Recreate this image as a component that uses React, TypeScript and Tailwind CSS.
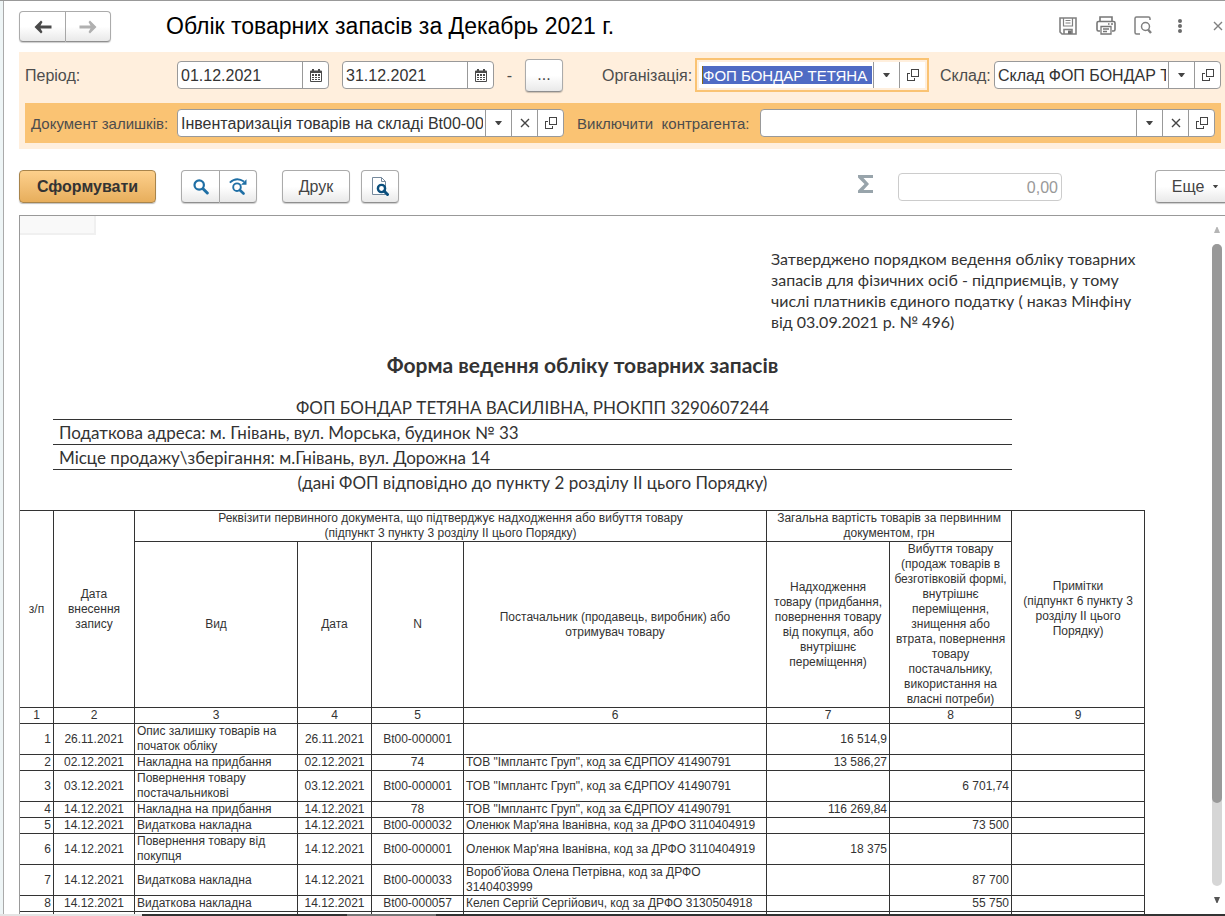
import React, { useState } from 'react';
import clsx from 'clsx';

type IconProps = { className?: string };

interface EntryRow {
  id: number;
  date: string;
  kind: string;
  docDate: string;
  number: string;
  partner: string;
  income: string;
  outcome: string;
}

const ROWS: EntryRow[] = [
  { id: 1, date: '26.11.2021', kind: 'Опис залишку товарів на початок обліку', docDate: '26.11.2021', number: 'Bt00-000001', partner: '', income: '16 514,9', outcome: '' },
  { id: 2, date: '02.12.2021', kind: 'Накладна на придбання', docDate: '02.12.2021', number: '74', partner: 'ТОВ "Імплантс Груп", код за ЄДРПОУ 41490791', income: '13 586,27', outcome: '' },
  { id: 3, date: '03.12.2021', kind: 'Повернення товару постачальникові', docDate: '03.12.2021', number: 'Bt00-000001', partner: 'ТОВ "Імплантс Груп", код за ЄДРПОУ 41490791', income: '', outcome: '6 701,74' },
  { id: 4, date: '14.12.2021', kind: 'Накладна на придбання', docDate: '14.12.2021', number: '78', partner: 'ТОВ "Імплантс Груп", код за ЄДРПОУ 41490791', income: '116 269,84', outcome: '' },
  { id: 5, date: '14.12.2021', kind: 'Видаткова накладна', docDate: '14.12.2021', number: 'Bt00-000032', partner: "Оленюк Мар'яна Іванівна, код за ДРФО 3110404919", income: '', outcome: '73 500' },
  { id: 6, date: '14.12.2021', kind: 'Повернення товару від покупця', docDate: '14.12.2021', number: 'Bt00-000001', partner: "Оленюк Мар'яна Іванівна, код за ДРФО 3110404919", income: '18 375', outcome: '' },
  { id: 7, date: '14.12.2021', kind: 'Видаткова накладна', docDate: '14.12.2021', number: 'Bt00-000033', partner: "Вороб'йова Олена Петрівна, код за ДРФО 3140403999", income: '', outcome: '87 700' },
  { id: 8, date: '14.12.2021', kind: 'Видаткова накладна', docDate: '14.12.2021', number: 'Bt00-000057', partner: 'Келеп Сергій Сергійович, код за ДРФО 3130504918', income: '', outcome: '55 750' },
];

// --- Icons ---
const ArrowIcon = ({ className }: IconProps) => (
  <svg viewBox="0 0 18 14" className={clsx('h-[14px] w-[18px]', className)} fill="currentColor">
    <path d="M0.5 7 7 0.5 8.5 2 6.5 5.5H17.5V8.5H6.5L8.5 12 7 13.5Z" />
  </svg>
);

const CaretIcon = ({ className }: IconProps) => (
  <svg viewBox="0 0 7 4" className={clsx('h-1 w-[7px]', className)} fill="currentColor">
    <path d="M0 0H7L4 4H3Z" />
  </svg>
);

const ScrollArrowIcon = ({ className }: IconProps) => (
  <svg viewBox="0 0 6 6" className={clsx('size-1.5', className)} fill="currentColor">
    <path d="M0 0H6L3.5 6H2.5Z" />
  </svg>
);

const CrossIcon = ({ className }: IconProps) => (
  <svg viewBox="0 0 10 10" className={clsx('size-[10px]', className)} fill="none" stroke="currentColor" strokeWidth="1.4">
    <path d="M1 1 9 9M9 1 1 9" />
  </svg>
);

const OpenIcon = () => (
  <svg viewBox="0 0 12 12" className="size-3" fill="none" stroke="currentColor" shapeRendering="crispEdges">
    <path d="M4.5 0.5H11.5V7.5H4.5ZM3 4.5H0.5V11.5H7.5V9" />
  </svg>
);

const CalendarIcon = () => (
  <svg viewBox="0 0 12 13" className="h-[13px] w-3">
    <path d="M1 1.5H2V0H4V1.5H8V0H10V1.5H11Q12 1.5 12 2.5V12Q12 13 11 13H1Q0 13 0 12V2.5Q0 1.5 1 1.5Z" fill="#4a4a4a" />
    <path d="M1 4H11V12H1Z" fill="#fff" />
    <path d="M2 5H4V7H2ZM5 5H7V7H5ZM8 5H10V7H8ZM2 8H4V9H2ZM5 8H7V9H5ZM8 8H10V9H8ZM2 10H4V11H2ZM5 10H7V11H5ZM8 10H10V11H8Z" fill="#4a4a4a" />
  </svg>
);

const SaveIcon = () => (
  <svg viewBox="0 0 18 18" className="size-[18px]" fill="none" stroke="#808080" strokeWidth="1.6">
    <path d="M1 1H17V17H3L1 15Z" />
    <path d="M4.5 1V9H13.5V1M6.5 3.5H11.5M6.5 6H11.5" strokeWidth="1.2" />
    <path d="M5 17V12.5H13V17" />
    <path d="M9 13.5H12.5V17H9Z" fill="#707070" stroke="none" />
  </svg>
);

const PrinterIcon = () => (
  <svg viewBox="0 0 20 19" className="h-[19px] w-5" fill="none" stroke="#777" strokeWidth="1.6">
    <path d="M4 5.5V1H16V5.5" />
    <path d="M4 15H2.5Q1 15 1 13.5V7Q1 5.5 2.5 5.5H17.5Q19 5.5 19 7V13.5Q19 15 17.5 15H16" />
    <path d="M5 10.5H15V18H5ZM7 13H13M7 15.5H11" strokeWidth="1.3" />
    <path d="M12 8H13.5M15 8H17" />
  </svg>
);

const PreviewIcon = () => (
  <svg viewBox="0 0 18 19" className="h-[19px] w-[18px]" fill="none" stroke="#808080" strokeWidth="1.5">
    <path d="M6 18H2.5Q1 18 1 16.5V2.5Q1 1 2.5 1H14.5Q16 1 16 2.5V4" />
    <circle cx="11.5" cy="10.5" r="4" />
    <path d="M14 13.5 17 17" strokeWidth="2.4" />
  </svg>
);

const DotsIcon = () => (
  <svg viewBox="0 0 4 14" className="h-[14px] w-1" fill="#6b6b6b">
    <circle cx="2" cy="2" r="2" />
    <circle cx="2" cy="7" r="2" />
    <circle cx="2" cy="12" r="2" />
  </svg>
);

const SearchIcon = () => (
  <svg viewBox="0 0 16 16" className="size-4" fill="none" stroke="#1f6fa5">
    <circle cx="6.2" cy="6" r="4.7" strokeWidth="2.2" />
    <path d="M10 9.8 14.3 14" strokeWidth="3" strokeLinecap="round" />
  </svg>
);

const SearchNextIcon = () => (
  <svg viewBox="0 0 18 17" className="h-[17px] w-[18px]" fill="none" stroke="#1f6fa5">
    <path d="M0.8 4.6Q7.5 -1.6 15 3.6" strokeWidth="1.8" />
    <path d="M17.5 1.2V6.8H12Z" fill="#1f6fa5" stroke="none" />
    <circle cx="8" cy="9.2" r="3.8" strokeWidth="1.9" />
    <path d="M10.8 12 14.5 15.5" strokeWidth="2.6" strokeLinecap="round" />
  </svg>
);

const DocSearchIcon = () => (
  <svg viewBox="0 0 17 19" className="h-[19px] w-[17px]" fill="none">
    <path d="M0.5 0.5H9.5L13.5 4.5V17.5H0.5Z" fill="#fff" stroke="#75899c" />
    <path d="M9.5 0.5V4.5H13.5" stroke="#75899c" />
    <circle cx="9.5" cy="11.5" r="3.6" fill="#fff" stroke="#0b4f7d" strokeWidth="2.4" />
    <path d="M12.3 14.3 15.5 17.5" stroke="#0b4f7d" strokeWidth="3" strokeLinecap="round" />
  </svg>
);

// --- Form parts ---
const FieldButton: React.FC<{ label: string; children: React.ReactNode }> = ({ label, children }) => (
  <button aria-label={label} className="flex w-[26px] shrink-0 items-center justify-center border-l border-[#999] text-[#444]">
    {children}
  </button>
);

interface FieldProps {
  id: string;
  initial: string;
  ariaLabel?: string;
  className?: string;
  focused?: boolean;
  children: React.ReactNode;
}

const Field: React.FC<FieldProps> = ({ id, initial, ariaLabel, className, focused, children }) => {
  const [value, setValue] = useState(initial);
  return (
    <div
      className={clsx(
        'flex min-w-0 overflow-hidden bg-white',
        focused ? 'h-[26px]' : 'h-7 rounded border border-[#999]',
        className
      )}
    >
      <input
        id={id}
        aria-label={ariaLabel}
        value={value}
        onChange={(e) => setValue(e.target.value)}
        className={clsx(
          'min-w-0 flex-1 pt-0.5 outline-none',
          focused ? 'ml-[3px] mr-px my-1 border-l border-[#8c6a14] bg-[#4f6bc4] text-[15px] text-white' : 'mr-0.5 pl-[3px] text-base text-[#333]'
        )}
      />
      {children}
    </div>
  );
};

const plainButton =
  'flex items-center justify-center border border-[#ababab] border-b-[#8f8f8f] bg-linear-to-b from-white from-50% to-[#e9e9e9] text-[#444] shadow-[0_1px_1px_rgba(0,0,0,0.2)]';

const Header = () => (
  <header className="flex h-[51px] shrink-0 items-center pl-[15px]">
    <div className="flex h-[31px]">
      <button aria-label="Назад" className={clsx(plainButton, 'w-[47px] rounded-l')}>
        <ArrowIcon className="text-[#4a4a4a]" />
      </button>
      <button aria-label="Вперед" className={clsx(plainButton, 'w-[45px] rounded-r border-l-0')}>
        <ArrowIcon className="rotate-180 text-[#b0b0b0]" />
      </button>
    </div>
    <h1 className="ml-[55px] flex-1 text-[23px] text-black">Облік товарних запасів за Декабрь 2021 г.</h1>
    <div className="flex items-center pb-0.5">
      <button aria-label="Зберегти"><SaveIcon /></button>
      <button aria-label="Друкувати" className="ml-[19px]"><PrinterIcon /></button>
      <button aria-label="Перегляд" className="ml-[18px]"><PreviewIcon /></button>
      <button aria-label="Більше" className="ml-[26px]"><DotsIcon /></button>
      <button aria-label="Закрити" className="ml-[31px] mr-0.5"><CrossIcon className="text-[#808080]" /></button>
    </div>
  </header>
);

const fieldLabel = 'shrink-0 whitespace-pre pt-0.5';

const Filters = () => (
  <section className="ml-[15px] flex flex-col gap-[11px] bg-[#ffefdd] py-1.5 pr-1 pl-1.5 text-base text-[#4d4d4d]">
    <div className="flex h-[34px] items-center">
      <label htmlFor="from" className={clsx(fieldLabel, 'w-[152px]')}>Період:</label>
      <Field id="from" initial="01.12.2021" className="w-[152px]">
        <FieldButton label="Календар"><CalendarIcon /></FieldButton>
      </Field>
      <Field id="to" ariaLabel="Кінець періоду" initial="31.12.2021" className="ml-[13px] w-[152px]">
        <FieldButton label="Календар"><CalendarIcon /></FieldButton>
      </Field>
      <span className="w-[31px] pt-0.5 text-center">-</span>
      <button className={clsx(plainButton, 'h-[33px] w-[38px] shrink-0 rounded')}>...</button>
      <label htmlFor="org" className={clsx(fieldLabel, 'ml-[39px] w-[93px]')}>Організація:</label>
      <div className="w-[234px] shrink-0 border-2 border-[#fac373] p-0.5">
        <Field id="org" initial="ФОП БОНДАР ТЕТЯНА" focused>
          <FieldButton label="Вибрати"><CaretIcon /></FieldButton>
          <FieldButton label="Відкрити"><OpenIcon /></FieldButton>
        </Field>
      </div>
      <label htmlFor="store" className={clsx(fieldLabel, 'ml-[11px] w-[54px]')}>Склад:</label>
      <Field id="store" initial="Склад ФОП БОНДАР Т" className="flex-1">
        <FieldButton label="Вибрати"><CaretIcon /></FieldButton>
        <FieldButton label="Відкрити"><OpenIcon /></FieldButton>
      </Field>
    </div>
    <div className="flex h-10 items-center bg-[#fac373] px-1.5">
      <label htmlFor="doc" className={clsx(fieldLabel, 'w-[146px] text-[15px]')}>Документ залишків:</label>
      <Field id="doc" initial="Інвентаризація товарів на складі Bt00-000001" className="w-[387px] shrink-0">
        <FieldButton label="Вибрати"><CaretIcon /></FieldButton>
        <FieldButton label="Очистити"><CrossIcon /></FieldButton>
        <FieldButton label="Відкрити"><OpenIcon /></FieldButton>
      </Field>
      <label htmlFor="exclude" className={clsx(fieldLabel, 'ml-[13px] w-[183px] text-[15px]')}>Виключити  контрагента:</label>
      <Field id="exclude" initial="" className="flex-1">
        <FieldButton label="Вибрати"><CaretIcon /></FieldButton>
        <FieldButton label="Очистити"><CrossIcon /></FieldButton>
        <FieldButton label="Відкрити"><OpenIcon /></FieldButton>
      </Field>
    </div>
  </section>
);

const Toolbar = () => (
  <div className="mt-[21px] mb-3 ml-[15px] flex h-[33px] shrink-0 items-stretch text-base">
    <button className="w-[137px] rounded-sm border border-[#a8844b] bg-linear-to-b from-[#fdd08c] to-[#e7ae5c] font-bold text-[#333] shadow-[0_1px_1px_rgba(0,0,0,0.25)]">
      Сформувати
    </button>
    <div className="ml-[25px] flex">
      <button aria-label="Знайти" className={clsx(plainButton, 'w-[39px] rounded-l-sm')}><SearchIcon /></button>
      <button aria-label="Знайти далі" className={clsx(plainButton, 'w-[37px] rounded-r-sm border-l-0')}><SearchNextIcon /></button>
    </div>
    <button className={clsx(plainButton, 'ml-[25px] w-[68px] rounded-sm')}>Друк</button>
    <button aria-label="Попередній перегляд" className={clsx(plainButton, 'ml-[11px] w-[38px] rounded-sm')}><DocSearchIcon /></button>
    <div className="ml-auto flex items-center">
      <svg viewBox="0 0 15 18" className="mb-1.5 h-[18px] w-[15px]" fill="#98a4ab">
        <path d="M0 0H15V3H5.5L11 9 5.5 15H15V18H0V15.5L6.5 9 0 2.5Z" />
      </svg>
      <input
        aria-label="Сума"
        defaultValue="0,00"
        className="ml-[25px] h-7 w-[164px] rounded border border-[#ccc] bg-white pt-0.5 pr-[3px] text-right text-[#999]"
      />
    </div>
    <button className={clsx(plainButton, 'ml-[93px] w-[70px] gap-2 rounded-l-sm border-r-0 pl-2.5')}>
      Еще
      <CaretIcon className="h-[3px] w-[6px]" />
    </button>
  </div>
);

// --- Report ---
const cell = 'border-r border-b border-[#333] px-0.5 py-0';
const headCell = clsx(cell, 'font-normal');

const ReportTable = () => (
  <table className="mt-[15px] w-[1125px] table-fixed border-separate border-spacing-0 border-t border-[#333] text-center text-xs leading-[15px] text-[#333]">
    <colgroup>
      <col className="w-[34px]" />
      <col className="w-[81px]" />
      <col className="w-[163px]" />
      <col className="w-[74px]" />
      <col className="w-[92px]" />
      <col className="w-[303px]" />
      <col className="w-[123px]" />
      <col className="w-[122px]" />
      <col className="w-[133px]" />
    </colgroup>
    <thead>
      <tr>
        <th rowSpan={2} className={headCell}>з/п</th>
        <th rowSpan={2} className={headCell}>Дата внесення запису</th>
        <th colSpan={4} className={headCell}>
          Реквізити первинного документа, що підтверджує надходження або вибуття товару
          <br />
          (підпункт 3 пункту 3 розділу II цього Порядку)
        </th>
        <th colSpan={2} className={headCell}>Загальна вартість товарів за первинним документом, грн</th>
        <th rowSpan={2} className={headCell}>
          Примітки
          <br />
          (підпункт 6 пункту 3 розділу II цього Порядку)
        </th>
      </tr>
      <tr>
        <th className={headCell}>Вид</th>
        <th className={headCell}>Дата</th>
        <th className={headCell}>N</th>
        <th className={headCell}>
          Постачальник (продавець, виробник) або
          <br />
          отримувач товару
        </th>
        <th className={headCell}>
          Надходження
          <br />
          товару (придбання, повернення товару від покупця, або внутрішнє переміщення)
        </th>
        <th className={headCell}>
          Вибуття товару (продаж товарів в безготівковій формі, внутрішнє переміщення, знищення або втрата, повернення
          товару постачальнику, використання на власні потреби)
        </th>
      </tr>
      <tr>
        {[1, 2, 3, 4, 5, 6, 7, 8, 9].map((n) => (
          <th key={n} className={headCell}>{n}</th>
        ))}
      </tr>
    </thead>
    <tbody>
      {ROWS.map((row) => (
        <tr key={row.id}>
          <td className={clsx(cell, 'text-right')}>{row.id}</td>
          <td className={cell}>{row.date}</td>
          <td className={clsx(cell, 'text-left')}>{row.kind}</td>
          <td className={cell}>{row.docDate}</td>
          <td className={cell}>{row.number}</td>
          <td className={clsx(cell, 'text-left')}>{row.partner}</td>
          <td className={clsx(cell, 'text-right')}>{row.income}</td>
          <td className={clsx(cell, 'text-right')}>{row.outcome}</td>
          <td className={cell} />
        </tr>
      ))}
      <tr>
        {[1, 2, 3, 4, 5, 6, 7, 8, 9].map((n) => (
          <td key={n} className={clsx(cell, 'h-4')} />
        ))}
      </tr>
    </tbody>
  </table>
);

const ownerLine = 'border-b border-[#333] pt-0.5';

const Report = () => (
  <div className="min-w-0 flex-1 overflow-hidden text-[#333]">
    <div className="h-[19px] w-[76px] border-r-2 border-b-2 border-[#f0f0f0] bg-[#f9f9f9]" />
    <div className="w-[1125px] font-['Lato','Noto_Sans',sans-serif]">
      <p className="mt-[13px] ml-[751px] w-[370px] text-base leading-[21px]">
        Затверджено порядком ведення обліку товарних запасів для фізичних осіб - підприємців, у тому числі платників
        єдиного податку ( наказ Мінфіну від 03.09.2021 р. № 496)
      </p>
      <h2 className="mt-[21px] text-center text-[21px] leading-6 font-bold">Форма ведення обліку товарних запасів</h2>
      <div className="mt-[18px] ml-[33px] w-[959px] text-[17px] leading-[22px]">
        <p className={clsx(ownerLine, 'text-center')}>ФОП БОНДАР ТЕТЯНА ВАСИЛІВНА, РНОКПП 3290607244</p>
        <p className={clsx(ownerLine, 'pl-1.5')}>Податкова адреса: м. Гнівань, вул. Морська, будинок № 33</p>
        <p className={clsx(ownerLine, 'pl-1.5')}>Місце продажу\зберігання: м.Гнівань, вул. Дорожна 14</p>
        <p className="pt-0.5 pb-px text-center">(дані ФОП відповідно до пункту 2 розділу II цього Порядку)</p>
      </div>
    </div>
    <ReportTable />
  </div>
);

const Scrollbar = () => (
  <div className="flex w-4 shrink-0 flex-col items-center py-[11px]">
    <ScrollArrowIcon className="rotate-180 text-[#b5b5b5]" />
    <div className="my-[11px] flex w-[10px] flex-1 flex-col rounded-full bg-[#d6d6d6]">
      <div className="h-[87%] rounded-full bg-[#999]" />
    </div>
    <ScrollArrowIcon className="text-[#555]" />
  </div>
);

const App: React.FC = () => {
  return (
    <div className="flex h-screen flex-col overflow-hidden bg-white font-['Liberation_Sans',Arial,sans-serif]">
      <div className="flex min-h-0 flex-1 border-t border-[#999]">
        <div className="w-1 shrink-0 border-r border-[#aaa] bg-[#eef5f6]" />
        <main className="flex min-w-0 flex-1 flex-col">
          <Header />
          <Filters />
          <Toolbar />
          <div className="ml-[15px] flex min-h-0 flex-1 border-t border-l border-[#999]">
            <Report />
            <Scrollbar />
          </div>
        </main>
      </div>
      <footer className="flex h-0.5 shrink-0 bg-[#333]">
        <div className="w-[142px] bg-[#e4e4e4]" />
        <div className="ml-[205px] w-[89px] bg-[#777]" />
      </footer>
    </div>
  );
};

export default App;
